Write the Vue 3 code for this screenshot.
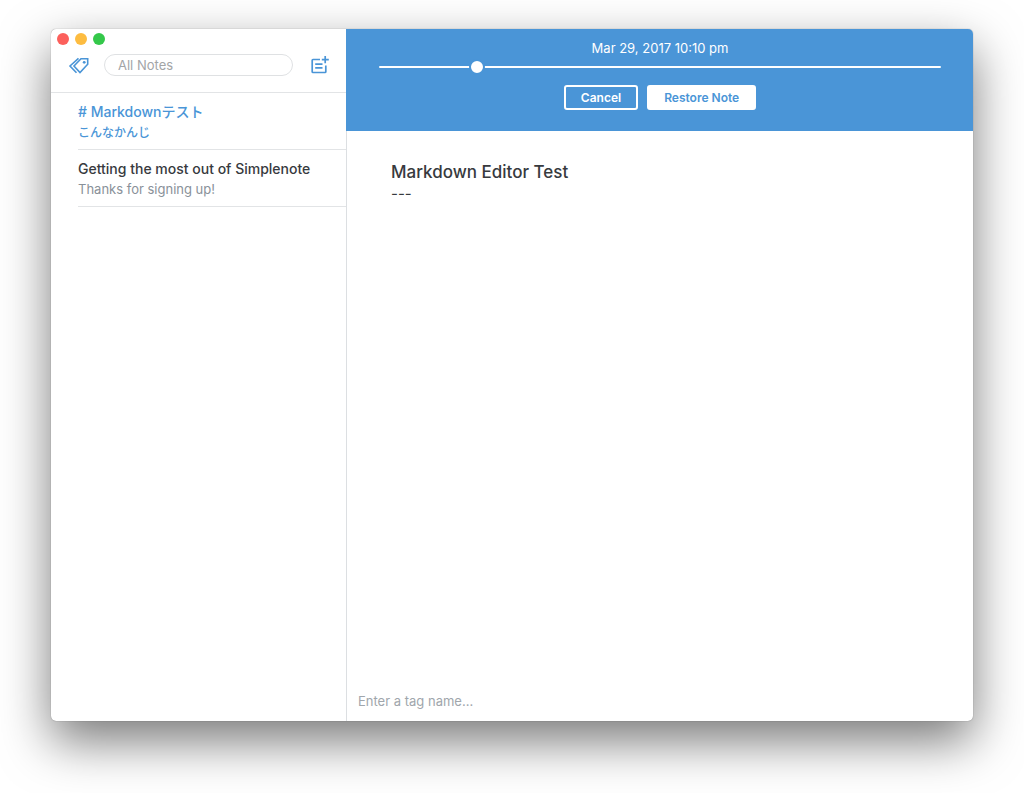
<script setup>
import { ref } from 'vue'

const search = ref('')
const tag = ref('')
const revision = ref(10)
const lights = ['close', 'minimize', 'maximize']
const notes = [
  { title: '# Markdownテスト', preview: 'こんなかんじ', lang: 'ja', selected: true },
  { title: 'Getting the most out of Simplenote', preview: 'Thanks for signing up!', lang: 'en', selected: false },
]
</script>

<template>
  <div class="desktop">
    <div class="window">
      <aside class="sidebar">
        <header class="toolbar">
          <div class="lights">
            <button v-for="l in lights" :key="l" type="button" class="light" :class="l" :aria-label="l"></button>
          </div>
          <div class="tools">
            <button type="button" class="icon" aria-label="Tags">
              <svg width="22" height="18" viewBox="0 0 22 18" fill="none" stroke="currentColor" stroke-width="1.6">
                <path d="M13 2.800h6.700v5.500L12 16.500 6 10z" />
                <path d="M10.500 2.300 2 10l6.500 6.800" />
                <circle cx="16.2" cy="6.3" r="1.4" fill="currentColor" stroke="none" />
              </svg>
            </button>
            <input v-model="search" class="search" type="text" placeholder="All Notes" aria-label="Search notes" />
            <button type="button" class="icon" aria-label="New note">
              <svg width="18" height="18" viewBox="0 0 18 18" fill="none" stroke="currentColor" stroke-width="1.7">
                <path d="M9 3.500H2a.8.8 0 0 0-.8.8V15.700a.8.8 0 0 0 .8.8h12a.8.8 0 0 0 .8-.8V9.500" />
                <path d="M4.200 8.200h7.300M4.200 11.800h7.300M14.200 0v7.200M10.800 3.600h7" />
              </svg>
            </button>
          </div>
        </header>
        <ul class="notes">
          <li v-for="n in notes" :key="n.title" class="note" :class="{ selected: n.selected }" :lang="n.lang">
            <div class="title">{{ n.title }}</div>
            <div class="preview">{{ n.preview }}</div>
          </li>
        </ul>
      </aside>
      <main class="editor">
        <section class="revisions">
          <label class="date" for="revision">Mar 29, 2017 10:10 pm</label>
          <input id="revision" v-model="revision" class="slider" type="range" min="0" max="61" />
          <div class="actions">
            <button type="button" class="btn cancel">Cancel</button>
            <button type="button" class="btn restore">Restore Note</button>
          </div>
        </section>
        <article class="content">
          <div class="heading">Markdown Editor Test</div>
          <div class="body">---</div>
        </article>
        <footer class="tags">
          <input v-model="tag" class="tag-input" type="text" placeholder="Enter a tag name..." aria-label="Tag name" />
        </footer>
      </main>
    </div>
  </div>
</template>

<style>
body {
  background: #fff;
}
</style>

<style scoped>
* {
  box-sizing: border-box;
}
.desktop {
  display: flex;
  height: 100vh;
  padding: 29px 51px 72px;
  overflow: hidden;
  font-family: Inter, "Noto Sans CJK JP", sans-serif;
  color: #373a3e;
}
.window {
  display: flex;
  flex: 1;
  min-width: 0;
  background: #fff;
  border-radius: 5px;
  overflow: hidden;
  box-shadow: 0 0 1px rgba(0, 0, 0, 0.5), 0 20px 50px rgba(0, 0, 0, 0.53);
}
button,
input {
  margin: 0;
  font-family: inherit;
}
.sidebar {
  flex: 0 0 295px;
  min-width: 0;
}
.toolbar {
  height: 64px;
  border-bottom: 1px solid #e2e4e6;
}
.lights {
  display: flex;
  gap: 6px;
  padding: 4px 6px 0;
}
.light {
  width: 12px;
  height: 12px;
  padding: 0;
  border: 0;
  border-radius: 50%;
}
.close {
  background: #fc605c;
}
.minimize {
  background: #fdbc40;
}
.maximize {
  background: #34c84a;
}
.tools {
  display: flex;
  align-items: center;
  padding: 9px 17px 0 17px;
}
.icon {
  display: flex;
  flex: none;
  padding: 0;
  border: 0;
  background: none;
  color: #4a95d7;
}
.search {
  flex: 1;
  min-width: 0;
  height: 22px;
  margin: 0 18px 0 14px;
  padding: 0 13px;
  border: 1px solid #dfe1e3;
  border-radius: 11px;
  font-size: 13px;
  outline: none;
}
.search::placeholder {
  color: #a3a5a7;
  opacity: 1;
}
.notes {
  margin: 0;
  padding: 0 0 0 27px;
  list-style: none;
}
.note {
  height: 57px;
  padding-top: 9px;
  border-bottom: 1px solid #e2e4e6;
  white-space: nowrap;
}
.title {
  font-size: 14px;
  font-weight: 500;
  line-height: 20px;
}
.preview {
  font-size: 13px;
  line-height: 21px;
  color: #899199;
}
.note:lang(ja) .preview {
  font-size: 12px;
  font-weight: 500;
}
.selected .title,
.selected .preview {
  color: #4a95d7;
}
.editor {
  display: flex;
  flex: 1;
  flex-direction: column;
  min-width: 0;
}
.revisions {
  display: flex;
  flex-direction: column;
  align-items: center;
  padding: 9px 32px 21px;
  border-left: 1px solid #4a95d7;
  background: #4a95d7;
  color: #fff;
}
.date {
  font-size: 13px;
  line-height: 20px;
}
.slider {
  width: 100%;
  height: 16px;
  margin: 1px 0 10px;
  background: none;
  appearance: none;
  outline: none;
}
.slider::-webkit-slider-runnable-track {
  height: 2px;
  border-radius: 1px;
  background: #fff;
}
.slider::-webkit-slider-thumb {
  width: 16px;
  height: 16px;
  margin-top: -7px;
  border: 2px solid #4a95d7;
  border-radius: 50%;
  background: #fff;
  appearance: none;
}
.actions {
  display: flex;
  gap: 9px;
}
.btn {
  height: 25px;
  padding: 0 15px;
  border: 2px solid #fff;
  border-radius: 3px;
  font-size: 12px;
  font-weight: 600;
}
.cancel {
  background: transparent;
  color: #fff;
}
.restore {
  background: #fff;
  color: #4a95d7;
}
.content {
  flex: 1;
  padding: 29px 44px;
  border-left: 1px solid #dcdfe2;
}
.heading {
  font-size: 17px;
  font-weight: 500;
  line-height: 24px;
}
.body {
  font-size: 15px;
  line-height: 20px;
}
.tags {
  display: flex;
  padding: 0 11px 10px;
  border-left: 1px solid #dcdfe2;
}
.tag-input {
  flex: 1;
  min-width: 0;
  height: 20px;
  padding: 0;
  border: 0;
  outline: none;
  font-size: 13px;
}
.tag-input::placeholder {
  color: #a0a6ac;
  opacity: 1;
}
</style>
